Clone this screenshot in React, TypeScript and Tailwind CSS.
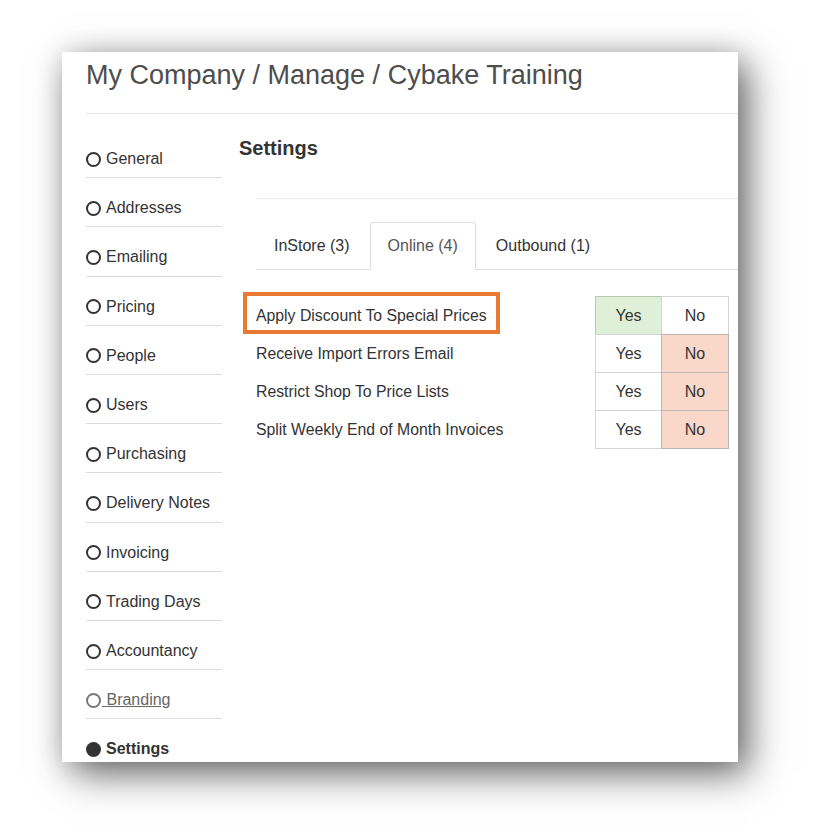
const menu = [
	"General",
	"Addresses",
	"Emailing",
	"Pricing",
	"People",
	"Users",
	"Purchasing",
	"Delivery Notes",
	"Invoicing",
	"Trading Days",
	"Accountancy",
	"Branding",
	"Settings",
]

const settings = [
	{ label: "Apply Discount To Special Prices", value: true },
	{ label: "Receive Import Errors Email", value: false },
	{ label: "Restrict Shop To Price Lists", value: false },
	{ label: "Split Weekly End of Month Invoices", value: false },
]

function SideItem({ name }: { name: string }) {
	if (name === "Settings") {
		return (
			<li className="flex items-center pt-[21px] pb-[9px] leading-[18.2px] font-bold text-[#333]">
				<span className="h-[15px] w-[15px] rounded-full bg-[#333]" />
				<span className="ml-[5px]">Settings</span>
			</li>
		)
	}
	if (name === "Branding") {
		return (
			<li className="flex items-center border-b border-[#dcdcdc] pt-[21px] pb-[9px] leading-[18.2px] text-[#666]">
				<span className="h-[15px] w-[15px] rounded-full border-2 border-[#777]" />
				<span className="ml-px underline">{"\u00a0"}Branding</span>
			</li>
		)
	}
	return (
		<li className="flex items-center border-b border-[#dcdcdc] pt-[21px] pb-[9px] leading-[18.2px] text-[#333]">
			<span className="h-[15px] w-[15px] rounded-full border-2 border-[#333]" />
			<span className="ml-[5px]">{name}</span>
		</li>
	)
}

function Toggle({ value }: { value: boolean }) {
	return (
		<div className="flex text-[16px] text-[#333]">
			<div
				className={
					value
						? "flex h-[39px] w-[67px] items-center justify-center border border-[#b9c7b5] bg-[#dff0d8]"
						: "flex h-[39px] w-[67px] items-center justify-center border border-[#d4d4d4] bg-white"
				}
			>
				Yes
			</div>
			<div
				className={
					value
						? "-ml-px flex h-[39px] w-[68px] items-center justify-center border border-[#d4d4d4] bg-white"
						: "-ml-px flex h-[39px] w-[68px] items-center justify-center border border-[#bdb5b1] bg-[#f9d7c9]"
				}
			>
				No
			</div>
		</div>
	)
}

export default function App() {
	return (
		<div className="h-[832px] w-[813px] bg-white pt-[52px] pl-[62px] font-['Liberation_Sans',Arial,sans-serif]">
			<div className="h-[710px] w-[676px] overflow-hidden bg-white shadow-[10px_12px_36px_rgba(0,0,0,0.58),0_0_24px_rgba(0,0,0,0.12)]">
				{/* Header */}
				<div className="ml-[24px] h-[62px] border-b border-[#e6e6e6] pt-[8px]">
					<h1 className="text-[27px] leading-[30px] text-[#4d4d4d]">My Company / Manage / Cybake Training</h1>
				</div>

				<div className="flex pt-[15px] pl-[24px]">
					{/* Side menu */}
					<ul className="w-[136px] shrink-0 text-[16px]">
						{menu.map((m) => (
							<SideItem key={m} name={m} />
						))}
					</ul>

					{/* Main */}
					<div className="ml-[17px] min-w-0 flex-1">
						<h2 className="mt-[7px] text-[20px] leading-[24px] font-bold text-[#333]">Settings</h2>
						<div className="mt-[38px] ml-[17px] border-t border-[#ececec] pt-[23px]">
							<ul className="flex border-b border-[#ddd] text-[16px] leading-[18px]">
								<li className="mr-[2px] -mb-px border border-transparent px-[17px] pt-[14px] pb-[14px] text-[#333]">
									InStore (3)
								</li>
								<li className="mr-[2px] -mb-px rounded-t-[4px] border border-[#ddd] border-b-white bg-white px-[17px] pt-[14px] pb-[14px] text-[#555]">
									Online (4)
								</li>
								<li className="mr-[2px] -mb-px border border-transparent px-[17px] pt-[14px] pb-[14px] text-[#333]">
									Outbound (1)
								</li>
							</ul>

							<div className="mt-[26px]">
								{settings.map((s, i) => (
									<div key={s.label} className={i === 0 ? "flex items-center" : "-mt-px flex items-center"}>
										<div className="relative w-[339px] text-[15.8px] text-[#333]">
											{s.label}
											{i === 0 && (
												<span className="absolute top-[-12px] left-[-13px] h-[42px] w-[257px] border-[4px] border-[#e97a33]" />
											)}
										</div>
										<Toggle value={s.value} />
									</div>
								))}
							</div>
						</div>
					</div>
				</div>
			</div>
		</div>
	)
}
